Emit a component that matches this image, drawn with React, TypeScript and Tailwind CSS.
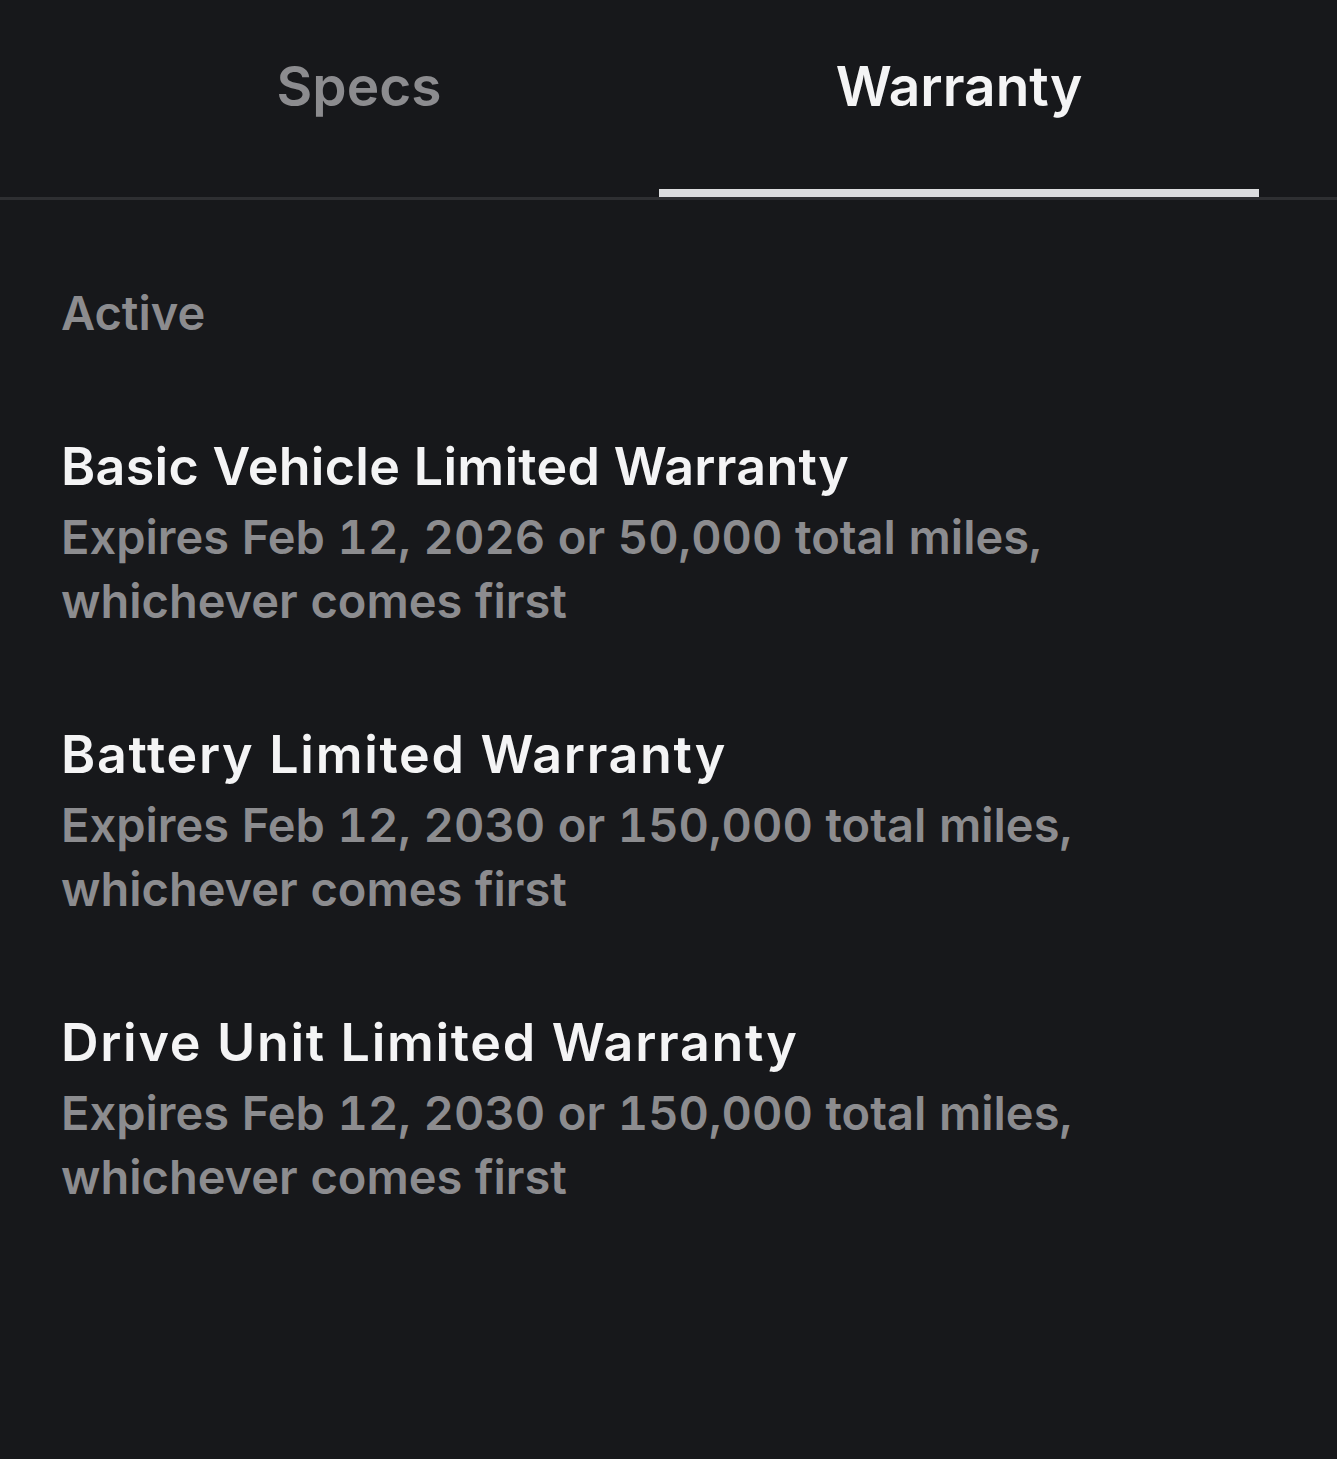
import React from "react";

const items = [
  { title: "Basic Vehicle Limited Warranty", desc: "Expires Feb 12, 2026 or 50,000 total miles, whichever comes first", track: "tracking-[0.3px]" },
  { title: "Battery Limited Warranty", desc: "Expires Feb 12, 2030 or 150,000 total miles, whichever comes first", track: "tracking-[1.7px]" },
  { title: "Drive Unit Limited Warranty", desc: "Expires Feb 12, 2030 or 150,000 total miles, whichever comes first", track: "tracking-[1.7px]" },
];

export default function App() {
  return (
    <div className="min-h-[1459px] w-full bg-[#17181b]" style={{ fontFamily: "Inter, 'Noto Sans', sans-serif" }}>
      <div className="border-b-[3px] border-[#2e2f32]">
        <div className="flex px-[59px]">
          <div className="w-[600px] h-[197px] flex flex-col">
            <div className="flex-1 flex items-center justify-center pb-[17px] text-[55px] font-semibold text-[#8c8c8f]">Specs</div>
            <div className="h-[8px]" />
          </div>
          <div className="w-[600px] h-[197px] flex flex-col">
            <div className="flex-1 flex items-center justify-center pb-[17px] text-[55px] font-semibold text-[#f4f4f5]">Warranty</div>
            <div className="h-[8px] bg-[#dcdddf]" />
          </div>
        </div>
      </div>
      <div className="px-[61px] pt-[85px]">
        <div className="text-[47px] font-semibold text-[#8c8c8f] leading-[56px]">Active</div>
        <div className="mt-[94px] flex flex-col gap-[90px]">
          {items.map((it) => (
            <div key={it.title} className="max-w-[1100px]">
              <div className={`text-[52px] font-semibold text-[#f4f4f5] leading-[64px] ${it.track}`}>{it.title}</div>
              <div className="text-[47px] font-semibold text-[#8c8c8f] leading-[64px] mt-[6px] tabular-nums">
                {it.desc.split(" whichever")[0]}
                <br />
                whichever comes first
              </div>
            </div>
          ))}
        </div>
      </div>
    </div>
  );
}
